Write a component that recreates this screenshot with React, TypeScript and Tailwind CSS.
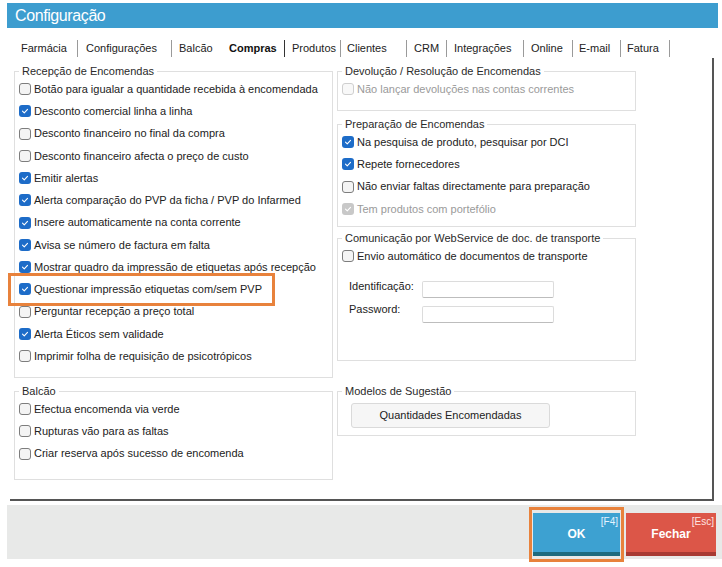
import React from "react";

type Opt = { label: string; checked?: boolean; disabled?: boolean };

function Box({ checked, disabled }: { checked?: boolean; disabled?: boolean }) {
  if (checked) {
    return (
      <span
        className={`flex h-[12px] w-[12px] shrink-0 items-center justify-center rounded-[3px] ${
          disabled ? "bg-[#c8c8c8]" : "bg-[#1d6cc8]"
        }`}
      >
        <svg viewBox="0 0 12 12" className="h-[10px] w-[10px]">
          <path d="M3 6.2 L5.1 8.2 L9 4" fill="none" stroke="white" strokeWidth="1.3" strokeLinecap="round" strokeLinejoin="round" />
        </svg>
      </span>
    );
  }
  return (
    <span
      className={`block h-[12px] w-[12px] shrink-0 rounded-[3px] border ${
        disabled ? "border-[#cfcfcf] bg-[#f8f8f8]" : "border-[#7d7d7d] bg-[#f4f4f4]"
      }`}
    />
  );
}

function Check({ label, checked, disabled, children }: Opt & { children?: React.ReactNode }) {
  return (
    <div className="relative flex h-[22.25px] items-center">
      <Box checked={checked} disabled={disabled} />
      <span className={`ml-[3px] whitespace-nowrap ${disabled ? "text-[#9a9a9a]" : "text-[#222]"}`}>{label}</span>
      {children}
    </div>
  );
}

function Group({
  title,
  className,
  children,
}: {
  title: string;
  className: string;
  children?: React.ReactNode;
}) {
  return (
    <fieldset className={`border border-[#dfdfdf] px-[4px] ${className}`}>
      <legend className="px-[3px] leading-[14px] text-[#2a2a2a]">{title}</legend>
      {children}
    </fieldset>
  );
}

const recepcao: Opt[] = [
  { label: "Botão para igualar a quantidade recebida à encomendada" },
  { label: "Desconto comercial linha a linha", checked: true },
  { label: "Desconto financeiro no final da compra" },
  { label: "Desconto financeiro afecta o preço de custo" },
  { label: "Emitir alertas", checked: true },
  { label: "Alerta comparação do PVP da ficha / PVP do Infarmed", checked: true },
  { label: "Insere automaticamente na conta corrente", checked: true },
  { label: "Avisa se número de factura em falta", checked: true },
  { label: "Mostrar quadro da impressão de etiquetas após recepção", checked: true },
  { label: "Questionar impressão etiquetas com/sem PVP", checked: true },
  { label: "Perguntar recepção a preço total" },
  { label: "Alerta Éticos sem validade", checked: true },
  { label: "Imprimir folha de requisição de psicotrópicos" },
];

const balcao: Opt[] = [
  { label: "Efectua encomenda via verde" },
  { label: "Rupturas vão para as faltas" },
  { label: "Criar reserva após sucesso de encomenda" },
];

const preparacao: Opt[] = [
  { label: "Na pesquisa de produto, pesquisar por DCI", checked: true },
  { label: "Repete fornecedores", checked: true },
  { label: "Não enviar faltas directamente para preparação" },
  { label: "Tem produtos com portefólio", checked: true, disabled: true },
];

const tabs: { name: string; w: string; sep: "light" | "dark" | "none"; active?: boolean }[] = [
  { name: "Farmácia", w: "w-[64px] pl-[8px]", sep: "light" },
  { name: "Configurações", w: "w-[93px] pl-[8px]", sep: "light" },
  { name: "Balcão", w: "w-[49px] pl-[7px]", sep: "none" },
  { name: "Compras", w: "w-[63px] pl-[8px]", sep: "dark", active: true },
  { name: "Produtos", w: "w-[55px] pl-[7px]", sep: "light" },
  { name: "Clientes", w: "w-[65px] pl-[6px]", sep: "light" },
  { name: "CRM", w: "w-[39px] pl-[7px]", sep: "light" },
  { name: "Integrações", w: "w-[76px] pl-[7px]", sep: "light" },
  { name: "Online", w: "w-[48px] pl-[7px]", sep: "light" },
  { name: "E-mail", w: "w-[47px] pl-[6px]", sep: "light" },
  { name: "Fatura", w: "w-[48px] pl-[6px]", sep: "light" },
];

export default function App() {
  return (
    <div className="flex h-[567px] w-[722px] flex-col bg-white font-['Liberation_Sans',Arial,sans-serif] text-[11px]">
      {/* window title */}
      <div className="ml-[7px] mt-[3px] flex h-[25px] w-[711px] items-center bg-[#3d9dcf] pl-[8px]">
        <span className="text-[16px] tracking-[-0.4px] text-white">Configuração</span>
      </div>

      {/* tab strip */}
      <div className="ml-[13px] mt-[12px] flex h-[18px] items-start">
        {tabs.map((t) => (
          <React.Fragment key={t.name}>
            <div
              className={`h-[17px] shrink-0 whitespace-nowrap leading-[17px] ${t.w} ${
                t.active ? "font-bold text-[#111]" : "text-[#222]"
              }`}
            >
              {t.name}
            </div>
            {t.sep === "light" && <span className="block h-[17px] w-px shrink-0 bg-[#9a9a9a]" />}
            {t.sep === "dark" && <span className="block h-[17px] w-px shrink-0 bg-[#333]" />}
          </React.Fragment>
        ))}
      </div>

      {/* tab page */}
      <div className="ml-[10px] flex h-[443px] w-[704px] gap-[4px] border-b-2 border-r-2 border-[#555] pl-[4px] pt-[6px]">
        <div className="flex w-[319px] flex-col">
          <Group title="Recepção de Encomendas" className="h-[314px] w-[319px]">
            {recepcao.map((o) => (
              <Check key={o.label} {...o}>
                {o.label.startsWith("Questionar") && (
                  <span className="absolute left-[-11px] top-[-5px] h-[33px] w-[267px] border-[3px] border-[#e8823c]" />
                )}
              </Check>
            ))}
          </Group>
          <Group title="Balcão" className="mt-[6px] h-[96px] w-[319px]">
            {balcao.map((o) => (
              <Check key={o.label} {...o} />
            ))}
          </Group>
        </div>

        <div className="flex w-[299px] flex-col">
          <Group title="Devolução / Resolução de Encomendas" className="h-[47px] w-[299px]">
            <Check label="Não lançar devoluções nas contas correntes" disabled />
          </Group>
          <Group title="Preparação de Encomendas" className="mt-[6px] h-[110px] w-[299px]">
            {preparacao.map((o) => (
              <Check key={o.label} {...o} />
            ))}
          </Group>
          <Group title="Comunicação por WebService de doc. de transporte" className="mt-[4px] h-[130px] w-[299px]">
            <Check label="Envio automático de documentos de transporte" />
            <div className="ml-[7px] mt-[14px] flex items-start">
              <span className="-mt-[1px] w-[73px] leading-[13px] text-[#222]">Identificação:</span>
              <span className="block h-[17px] w-[132px] rounded-[2px] border border-[#dcdcdc] border-b-[#bdbdbd] bg-white" />
            </div>
            <div className="ml-[7px] mt-[8px] flex items-start">
              <span className="-mt-[3px] w-[73px] leading-[13px] text-[#222]">Password:</span>
              <span className="block h-[17px] w-[132px] rounded-[2px] border border-[#dcdcdc] border-b-[#bdbdbd] bg-white" />
            </div>
          </Group>
          <Group title="Modelos de Sugestão" className="mt-[23px] h-[52px] w-[299px]">
            <button className="ml-[9px] mt-[5px] flex h-[25px] w-[199px] items-center justify-center rounded-[3px] border border-[#dadada] bg-[#f6f6f6] text-[11px] text-[#222]">
              Quantidades Encomendadas
            </button>
          </Group>
        </div>
      </div>

      {/* action bar */}
      <div className="ml-[7px] mt-[4px] flex h-[54px] items-start justify-end gap-[6px] bg-[#e8e9e8] pr-[6px] pt-[8px]">
        <div className="relative">
          <button className="relative flex h-[43px] w-[87px] items-center justify-center border-b-[4px] border-[#1d6a7e] bg-[#3da1d1] font-bold text-[12px] text-white">
            <span className="absolute right-[2px] top-[1px] text-[10px] font-normal text-[#e4f3ff]">[F4]</span>
            <span className="mt-[2px]">OK</span>
          </button>
          <span className="absolute bottom-[-6px] left-[-4px] right-[-4px] top-[-6px] border-[3px] border-[#e8823c]" />
        </div>
        <button className="relative flex h-[43px] w-[90px] items-center justify-center border-b-[4px] border-[#a83a33] bg-[#dc5648] font-bold text-[12px] text-white">
          <span className="absolute right-[2px] top-[1px] text-[10px] font-normal text-[#ffe4e0]">[Esc]</span>
          <span className="mt-[2px]">Fechar</span>
        </button>
      </div>
    </div>
  );
}
